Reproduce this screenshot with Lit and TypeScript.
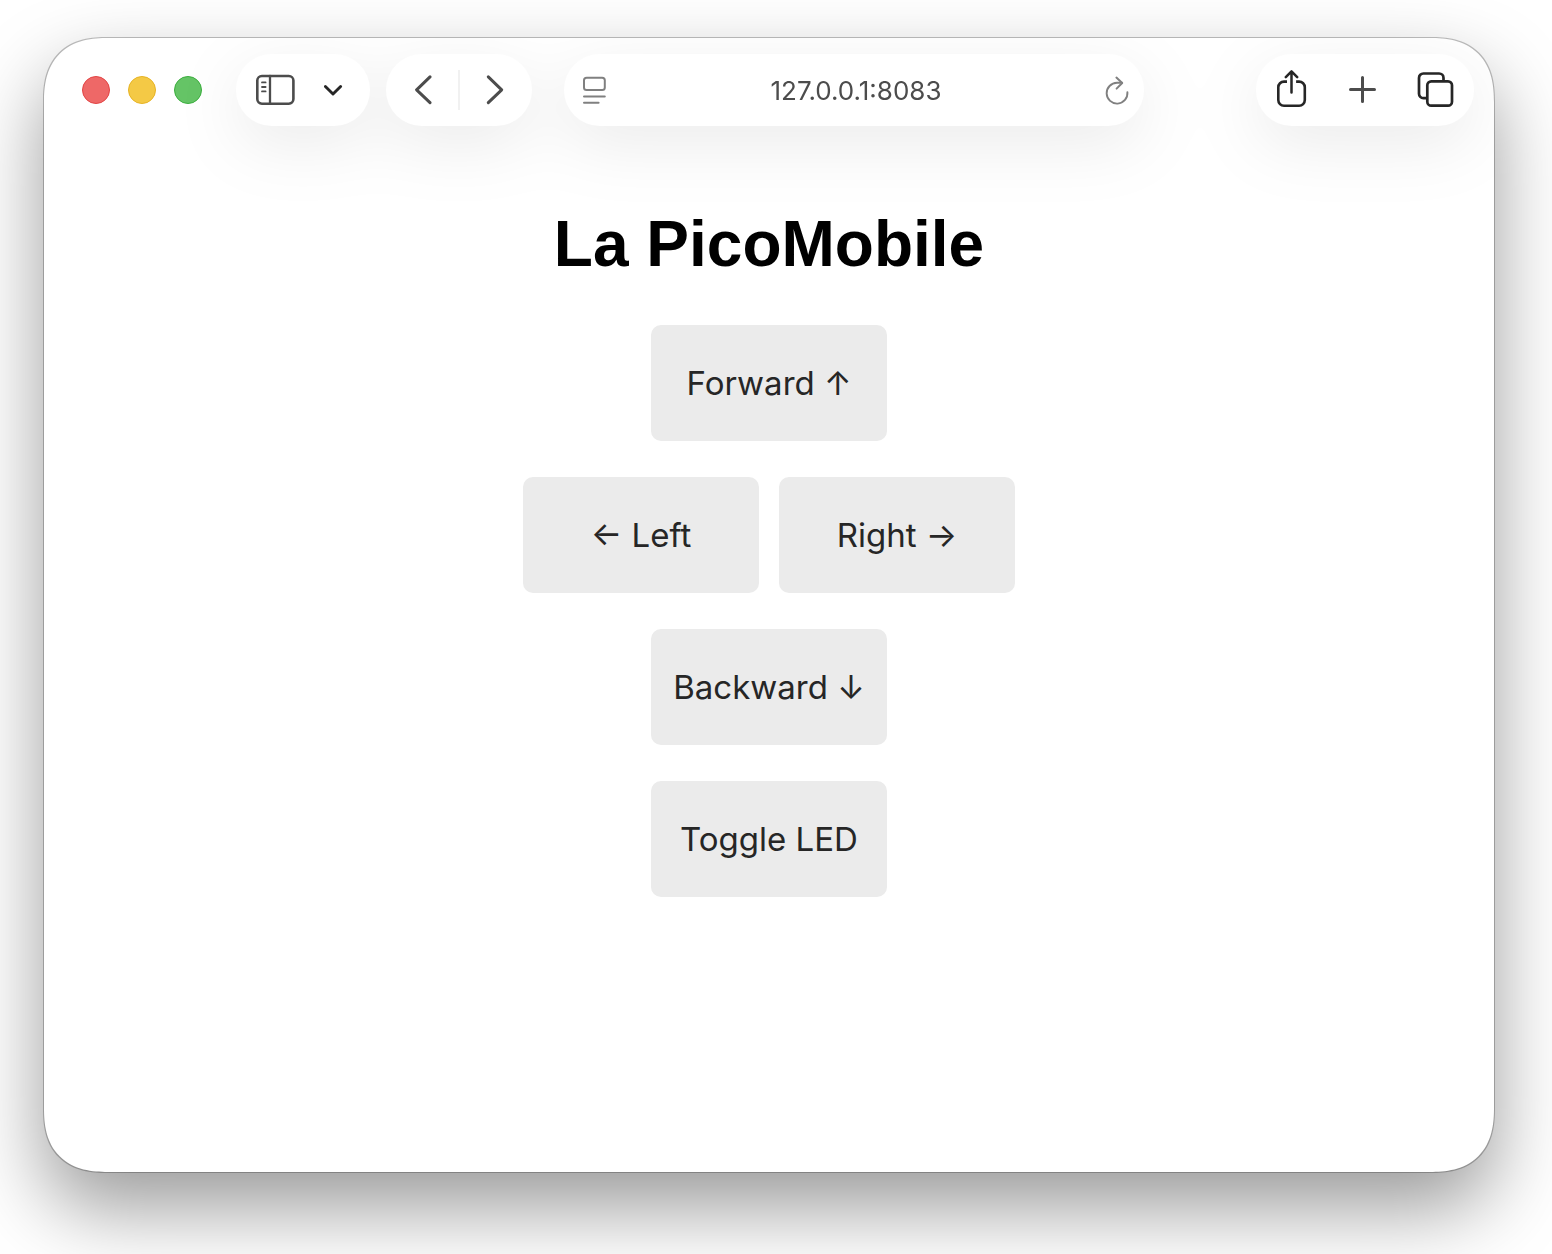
import { LitElement, html, css, svg } from "lit";
import { customElement, state } from "lit/decorators.js";

type Command = { id: string; label: string };

const rows: Command[][] = [
  [{ id: "forward", label: "Forward ↑" }],
  [
    { id: "left", label: "← Left" },
    { id: "right", label: "Right →" },
  ],
  [{ id: "backward", label: "Backward ↓" }],
  [{ id: "led", label: "Toggle LED" }],
];

const icon = (width: number, tone: string, body: unknown) => html`
  <svg class="icon ${tone}" width=${width} height="40" viewBox="0 0 ${width} 40" aria-hidden="true">${body}</svg>
`;

const sidebarIcon = icon(40, "mid", svg`
  <rect x="1.3" y="6" width="36.1" height="27.7" rx="4.6" stroke-width="2.6" />
  <path d="M14 6v27.7" stroke-width="2.3" />
  <path d="M6 12.4h3.6M6 17h3.6M6 21.4h3.6" stroke-width="1.8" />
`);
const chevronDownIcon = icon(20, "dark", svg`<path d="M1.4 16.5 9 24l7.6-7.5" stroke-width="2.9" />`);
const backIcon = icon(20, "mid", svg`<path d="M18 6.9 4.6 19.8 18 32.7" stroke-width="3" />`);
const forwardIcon = icon(20, "mid", svg`<path d="M2.3 6.9 15.7 19.8 2.3 32.7" stroke-width="3" />`);
const pageIcon = icon(26, "pale", svg`
  <rect x="2" y="7.7" width="20.8" height="12.4" rx="2.6" stroke-width="2" />
  <path d="M2 26.4h20.8M2 32.8h14.6" stroke-width="2" />
`);
const reloadIcon = icon(26, "pale", svg`
  <path d="M23.4 22.2A10.4 10.4 0 1 1 13 12.8h5" stroke-width="1.9" />
  <path d="M12.4 7.6l5.8 5.4-5.6 5.6" stroke-width="2" />
`);
const shareIcon = icon(40, "dark", svg`
  <path d="M15 11.6h-3a5.7 5.7 0 0 0-5.7 5.7v12.8a5.7 5.7 0 0 0 5.7 5.7h15.1a5.7 5.7 0 0 0 5.7-5.7V17.3a5.7 5.7 0 0 0-5.7-5.7h-3" stroke-width="2.6" stroke-linecap="butt" />
  <path d="M19.5 22.6V1.6M13.8 7.1l5.7-5.7 5.7 5.7" stroke-width="2.5" />
`);
const plusIcon = icon(40, "mid", svg`<path d="M18.5 7.5v24M6.5 19.5h24" stroke-width="3" />`);
const tabsIcon = icon(40, "dark", svg`
  <rect x="11.3" y="11.3" width="24.7" height="24.4" rx="4" stroke-width="2.7" />
  <path d="M10.4 28.2H7.4A4.4 4.4 0 0 1 3 23.8V7.9a4.4 4.4 0 0 1 4.4-4.4h15.7a4.4 4.4 0 0 1 4.4 4.4v2.6" stroke-width="2.7" stroke-linecap="butt" />
`);

@customElement("browser-toolbar")
export class BrowserToolbar extends LitElement {
  static styles = css`
    :host {
      display: block;
    }
    .toolbar {
      display: flex;
      align-items: center;
      padding: 16px 20px 16px 38px;
    }
    .lights {
      display: flex;
      gap: 18px;
      margin-right: 34px;
    }
    button {
      display: flex;
      align-items: center;
      justify-content: center;
      padding: 0;
      border: 0;
      background: none;
      font: inherit;
    }
    .light {
      width: 28px;
      height: 28px;
      border-radius: 50%;
      border: 1px solid;
    }
    .close {
      background: #ee6867;
      border-color: #e24444;
    }
    .minimize {
      background: #f4c945;
      border-color: #e6b325;
    }
    .zoom {
      background: #65c466;
      border-color: #3bae3e;
    }
    .groups {
      display: flex;
      flex: 1;
      min-width: 0;
      filter: drop-shadow(0 18px 32px rgba(0, 0, 0, 0.08));
    }
    .pill {
      display: flex;
      align-items: center;
      height: 72px;
      border-radius: 36px;
      background: #fff;
    }
    .side {
      gap: 28px;
      padding: 0 26px 0 20px;
      margin-right: 16px;
    }
    .history {
      margin-right: 32px;
    }
    .history button {
      width: 72px;
      height: 72px;
    }
    .divider {
      width: 2px;
      height: 40px;
      background: #f1f1f1;
    }
    .address {
      flex: 1;
      min-width: 0;
      padding: 0 14px 0 18px;
      margin-right: 112px;
    }
    .url {
      flex: 1;
      min-width: 0;
      padding: 2px 0 0;
      border: 0;
      outline: 0;
      background: none;
      color: #4c4c4c;
      font: 26px/32px Inter, "Liberation Sans", sans-serif;
      text-align: center;
    }
    .actions {
      gap: 32px;
      padding: 0 18px 0 16px;
    }
    .icon {
      display: block;
      flex: none;
      fill: none;
      stroke-linecap: round;
      stroke-linejoin: round;
    }
    .dark {
      stroke: #262626;
    }
    .mid {
      stroke: #4c4c4c;
    }
    .pale {
      stroke: #808080;
    }
  `;

  render() {
    return html`
      <header class="toolbar">
        <div class="lights">
          <button class="light close" aria-label="Close"></button>
          <button class="light minimize" aria-label="Minimize"></button>
          <button class="light zoom" aria-label="Zoom"></button>
        </div>
        <div class="groups">
          <div class="pill side">
            <button aria-label="Show sidebar">${sidebarIcon}</button>
            <button aria-label="Tab groups">${chevronDownIcon}</button>
          </div>
          <nav class="pill history">
            <button aria-label="Back">${backIcon}</button>
            <span class="divider"></span>
            <button aria-label="Forward">${forwardIcon}</button>
          </nav>
          <div class="pill address">
            <button aria-label="Page menu">${pageIcon}</button>
            <input class="url" type="text" aria-label="Address" value="127.0.0.1:8083" />
            <button aria-label="Reload">${reloadIcon}</button>
          </div>
          <div class="pill actions">
            <button aria-label="Share">${shareIcon}</button>
            <button aria-label="New tab">${plusIcon}</button>
            <button aria-label="Show tabs">${tabsIcon}</button>
          </div>
        </div>
      </header>
    `;
  }
}

@customElement("pico-remote")
export class PicoRemote extends LitElement {
  static styles = css`
    :host {
      display: block;
    }
    .remote {
      display: flex;
      flex-direction: column;
      align-items: center;
      padding: 65px 20px;
    }
    .title {
      margin: 0 0 44px;
      color: #000;
      font: bold 64px/74px "Liberation Sans", Arial, sans-serif;
      text-align: center;
    }
    .pad {
      display: flex;
      flex-direction: column;
      align-items: center;
      gap: 36px;
    }
    .row {
      display: flex;
      flex-wrap: wrap;
      justify-content: center;
      gap: 20px;
    }
    .command {
      width: 236px;
      height: 116px;
      padding: 0;
      border: 0;
      border-radius: 10px;
      background: #ebebeb;
      color: #262626;
      font: 33px/42px Inter, "Liberation Sans", sans-serif;
      white-space: nowrap;
    }
  `;

  @state() private last = "";

  private send(id: string) {
    this.last = id;
    this.dispatchEvent(new CustomEvent("command", { detail: id, bubbles: true, composed: true }));
  }

  render() {
    return html`
      <main class="remote">
        <h1 class="title">La PicoMobile</h1>
        <div class="pad">
          ${rows.map(
            (row) => html`
              <div class="row">
                ${row.map(
                  ({ id, label }) => html`<button class="command" @click=${() => this.send(id)}>${label}</button>`,
                )}
              </div>
            `,
          )}
        </div>
      </main>
    `;
  }
}

@customElement("app-root")
export class AppRoot extends LitElement {
  static styles = css`
    :host {
      display: flex;
      box-sizing: border-box;
      min-height: 100vh;
      padding: 38px 58px 82px 44px;
      overflow: hidden;
      background: #fff;
    }
    .window {
      flex: 1;
      min-width: 0;
      overflow: hidden;
      border-radius: 52px;
      background: #fff;
      box-shadow:
        0 0 0 1px rgba(0, 0, 0, 0.24),
        0 36px 80px rgba(0, 0, 0, 0.4);
    }
    @supports (corner-shape: superellipse(1.3)) {
      .window {
        border-radius: 64px;
        corner-shape: superellipse(1.3);
      }
    }
  `;

  render() {
    return html`
      <div class="window">
        <browser-toolbar></browser-toolbar>
        <pico-remote></pico-remote>
      </div>
    `;
  }
}
